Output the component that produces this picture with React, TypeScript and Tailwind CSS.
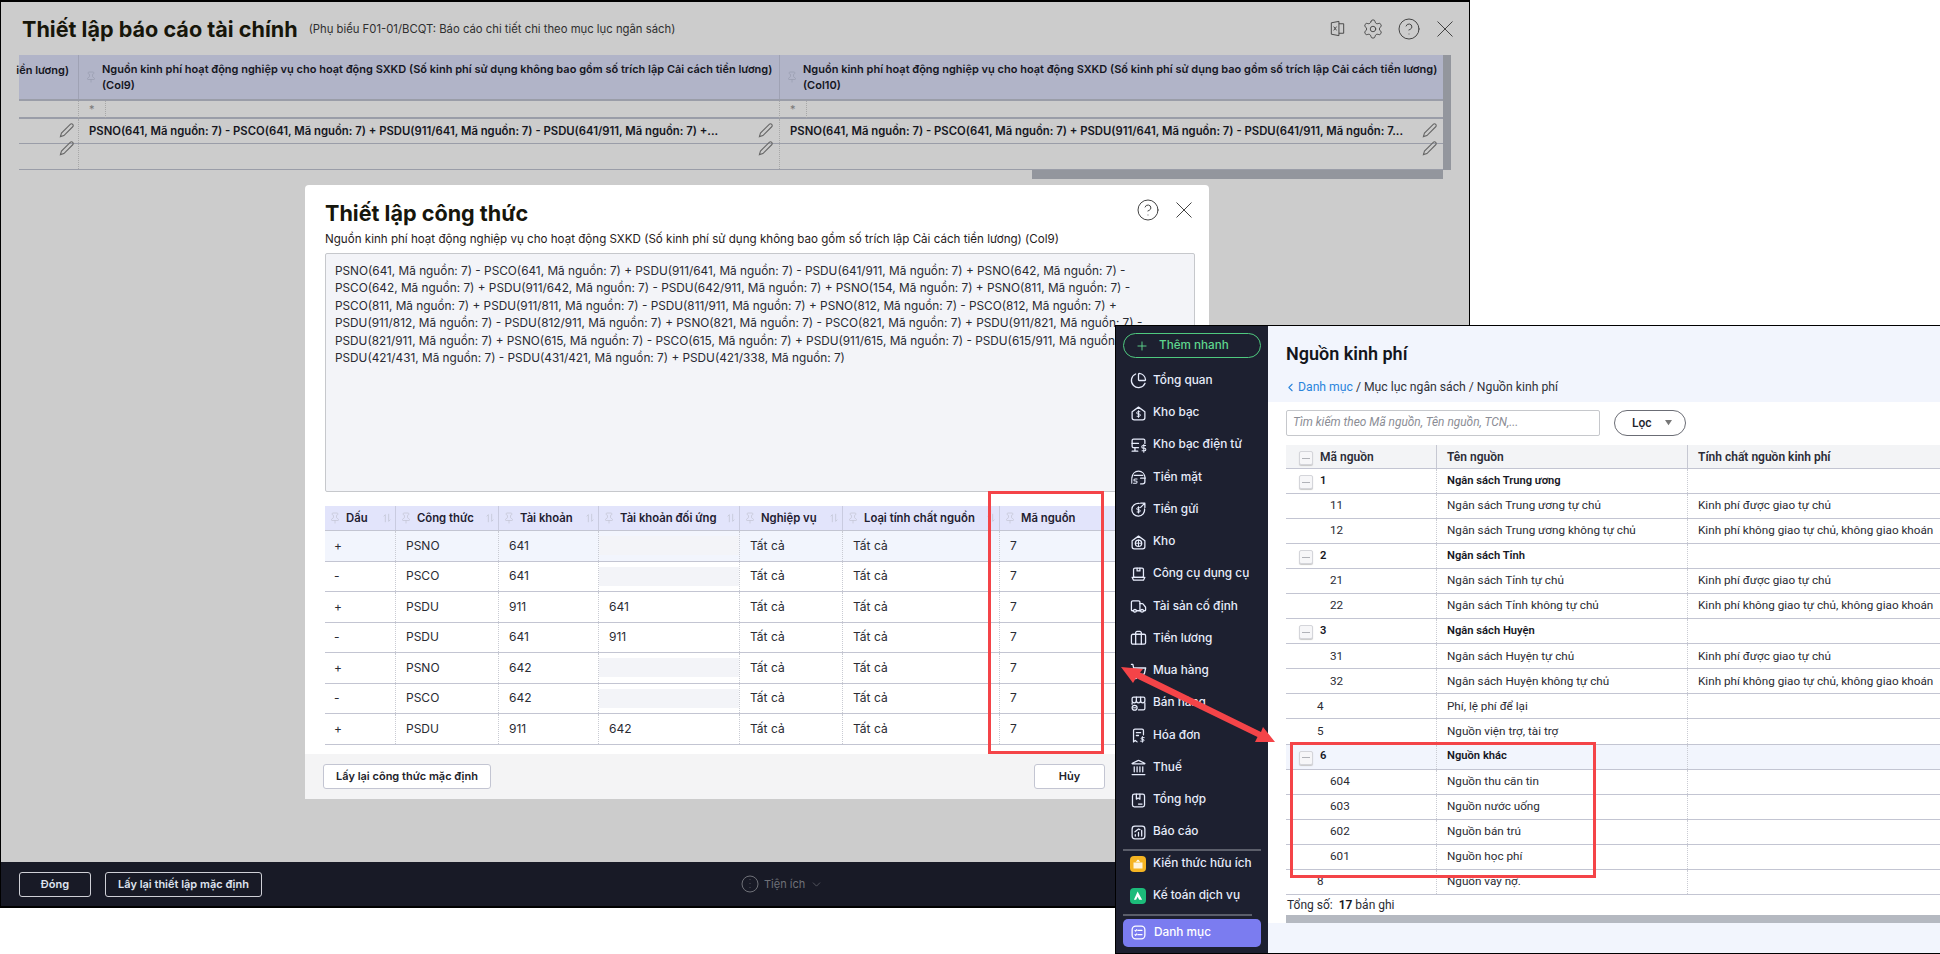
import {
  Briefcase,
  ChartPie,
  ChevronDown,
  ChevronLeft,
  HelpCircle,
  Landmark,
  Pin,
  Plus,
  Settings,
  ShoppingCart,
  Truck,
} from "lucide-react";
import type { ReactNode } from "react";

const line = { fill: "none", stroke: "currentColor", strokeWidth: 1.8, strokeLinecap: "round", strokeLinejoin: "round" } as const;

function Ico({ children }: { children: ReactNode }) {
  return (
    <svg viewBox="0 0 24 24" className="size-[17px] shrink-0" {...line}>
      {children}
    </svg>
  );
}

function CloseMark() {
  return (
    <svg viewBox="0 0 16 16" className="size-[16px]" fill="none" stroke="currentColor" strokeWidth="1">
      <path d="M.5.5l15 15M15.500.5l-15 15" />
    </svg>
  );
}

const sidebarItems: { label: string; icon: ReactNode }[] = [
  { label: "Tổng quan", icon: <ChartPie className="size-[17px]" strokeWidth={1.8} /> },
  {
    label: "Kho bạc",
    icon: (
      <Ico>
        <path d="M3 9.500 12 3l9 6.500V18a3 3 0 0 1-3 3H6a3 3 0 0 1-3-3z" />
        <path d="M14 9.500h-3a1.200 1.200 0 0 0 0 3.200h2a1.200 1.200 0 0 1 0 3.200h-3M12 8v9.500" strokeWidth="1.400" />
      </Ico>
    ),
  },
  {
    label: "Kho bạc điện tử",
    icon: (
      <Ico>
        <path d="M12 15H5a2 2 0 0 1-2-2V5a2 2 0 0 1 2-2h14a2 2 0 0 1 2 2v4" />
        <path d="M3 9h9M3 20h8M7 15v5" />
        <path d="M22 12h-3.500a1.500 1.500 0 0 0 0 3.800h2a1.500 1.500 0 0 1 0 3.700H17M19.500 10.500v11" strokeWidth="1.500" />
      </Ico>
    ),
  },
  {
    label: "Tiền mặt",
    icon: (
      <Ico>
        <path d="M2.500 13C3 7 7 3 12 3s9 4 9.500 10" />
        <path d="M6 9h12M21 13v5a3 3 0 0 1-3 3h-3M15 13h6" />
        <path d="M10 14H7a1.200 1.200 0 0 0 0 3h1.500a1.200 1.200 0 0 1 0 3H5M2.500 14v6" strokeWidth="1.500" />
      </Ico>
    ),
  },
  {
    label: "Tiền gửi",
    icon: (
      <Ico>
        <path d="M13 3.500A9 9 0 1 0 20.500 11" />
        <path d="M15 3h6v6M21 3l-6 6" />
        <path d="M14 9.500h-3a1.300 1.300 0 0 0 0 3h2a1.300 1.300 0 0 1 0 3h-3M12 8v9" strokeWidth="1.400" />
      </Ico>
    ),
  },
  {
    label: "Kho",
    icon: (
      <Ico>
        <path d="M3 9.500 12 3l9 6.500V18a3 3 0 0 1-3 3H6a3 3 0 0 1-3-3z" />
        <circle cx="12" cy="13" r="4.500" />
        <path d="M12 8.500v9M7.500 13h9" strokeWidth="1.400" />
      </Ico>
    ),
  },
  {
    label: "Công cụ dụng cụ",
    icon: (
      <Ico>
        <rect x="5" y="3" width="14" height="13" rx="2" />
        <path d="M3 16h18l-2 4H5zM10 3v4h4V3" />
      </Ico>
    ),
  },
  { label: "Tài sản cố định", icon: <Truck className="size-[17px]" strokeWidth={1.8} /> },
  { label: "Tiền lương", icon: <Briefcase className="size-[17px]" strokeWidth={1.8} /> },
  { label: "Mua hàng", icon: <ShoppingCart className="size-[17px]" strokeWidth={1.8} /> },
  {
    label: "Bán hàng",
    icon: (
      <Ico>
        <path d="M5 3h14a2 2 0 0 1 2 2v3a3 3 0 0 1-6 0 3 3 0 0 1-6 0 3 3 0 0 1-6 0V5a2 2 0 0 1 2-2z" />
        <path d="M9 3v5M15 3v5M21 11v8a2 2 0 0 1-2 2h-7M3 11v2" />
        <circle cx="6.500" cy="18" r="3.500" />
        <path d="M5 18h3" strokeWidth="1.400" />
      </Ico>
    ),
  },
  {
    label: "Hóa đơn",
    icon: (
      <Ico>
        <path d="M5 21V5a2 2 0 0 1 2-2h10a2 2 0 0 1 2 2v6M5 21l2.500-2 2.500 2" />
        <path d="M9 8h6M9 12h3" />
        <path d="M20 15h-3a1 1 0 0 0 0 2.500h1.500a1 1 0 0 1 0 2.500H15M17.500 13.500v8" strokeWidth="1.400" />
      </Ico>
    ),
  },
  { label: "Thuế", icon: <Landmark className="size-[17px]" strokeWidth={1.8} /> },
  {
    label: "Tổng hợp",
    icon: (
      <Ico>
        <rect x="3.500" y="3" width="17" height="18" rx="2.500" />
        <path d="M9 3v7l2.500-1.500L14 10V3M12 17h5" />
      </Ico>
    ),
  },
  {
    label: "Báo cáo",
    icon: (
      <Ico>
        <rect x="3" y="3" width="18" height="18" rx="4" />
        <path d="M7.500 17v-2M12 17v-5M16.500 17V9M7 11l5-4 2 1" />
      </Ico>
    ),
  },
];

const hSep = "border-r border-dotted border-[#c9cbd3]";

function PinMark({ className }: { className?: string }) {
  return <Pin className={`size-3 shrink-0 ${className ?? "text-[#c4c6d6]"}`} strokeWidth={1.5} />;
}

function SortMark() {
  return (
    <svg viewBox="0 0 12 12" className="ml-auto size-[10px] shrink-0 text-[#c4c6d6]" fill="none" stroke="currentColor" strokeWidth="1">
      <path d="M4 11V2L2 4M8 1v9l2-2" />
    </svg>
  );
}

function FormulaHead() {
  const cols = ["Dấu", "Công thức", "Tài khoản", "Tài khoản đối ứng", "Nghiệp vụ", "Loại tính chất nguồn", "Mã nguồn"];
  return (
    <div className="grid h-[25px] grid-cols-[71px_103px_100px_141px_103px_157px_195px] border-b border-[#c3c5d2] bg-[#e2e4fb] text-[11.300px] font-semibold text-[#1f2030]">
      {cols.map((c) => (
        <div key={c} className="flex items-center gap-[5px] border-r border-[#c9cbe0] pl-[4px] pr-[3px] last:border-r-0">
          <PinMark />
          <span className="whitespace-nowrap">{c}</span>
          <SortMark />
        </div>
      ))}
    </div>
  );
}

const formulaRows = [
  ["+", "PSNO", "641", "", true],
  ["-", "PSCO", "641", "", false],
  ["+", "PSDU", "911", "641", false],
  ["-", "PSDU", "641", "911", false],
  ["+", "PSNO", "642", "", false],
  ["-", "PSCO", "642", "", false],
  ["+", "PSDU", "911", "642", false],
] as const;

const formulaLines = [
  "PSNO(641, Mã nguồn: 7) - PSCO(641, Mã nguồn: 7) + PSDU(911/641, Mã nguồn: 7) - PSDU(641/911, Mã nguồn: 7) + PSNO(642, Mã nguồn: 7) -",
  "PSCO(642, Mã nguồn: 7) + PSDU(911/642, Mã nguồn: 7) - PSDU(642/911, Mã nguồn: 7) + PSNO(154, Mã nguồn: 7) + PSNO(811, Mã nguồn: 7) -",
  "PSCO(811, Mã nguồn: 7) + PSDU(911/811, Mã nguồn: 7) - PSDU(811/911, Mã nguồn: 7) + PSNO(812, Mã nguồn: 7) - PSCO(812, Mã nguồn: 7) +",
  "PSDU(911/812, Mã nguồn: 7) - PSDU(812/911, Mã nguồn: 7) + PSNO(821, Mã nguồn: 7) - PSCO(821, Mã nguồn: 7) + PSDU(911/821, Mã nguồn: 7) -",
  "PSDU(821/911, Mã nguồn: 7) + PSNO(615, Mã nguồn: 7) - PSCO(615, Mã nguồn: 7) + PSDU(911/615, Mã nguồn: 7) - PSDU(615/911, Mã nguồn: 7) -",
  "PSDU(421/431, Mã nguồn: 7) - PSDU(431/421, Mã nguồn: 7) + PSDU(421/338, Mã nguồn: 7)",
];

function FormulaModal() {
  return (
    <div className="absolute left-[305px] top-[185px] flex h-[614px] w-[904px] flex-col rounded-[4px] bg-white">
      <div className="flex h-[43px] items-start justify-between pl-[20px] pr-[7px] pt-[13px]">
        <h2 className="text-[21.600px] font-bold leading-[30px] text-[#16160c]">Thiết lập công thức</h2>
        <div className="flex items-center text-[#444]">
          <span className="flex w-[36px] justify-center">
            <HelpCircle className="size-[24px]" strokeWidth={1} />
          </span>
          <span className="flex w-[36px] justify-center">
            <CloseMark />
          </span>
        </div>
      </div>
      <p className="mt-[2px] pl-[20px] text-[11.600px] leading-[18px] text-[#1f2020]">
        Nguồn kinh phí hoạt động nghiệp vụ cho hoạt động SXKD (Số kinh phí sử dụng không bao gồm số trích lập Cải cách tiền lương) (Col9)
      </p>
      <div className="ml-[20px] mr-[14px] mt-[5px] h-[239px] rounded-[2px] border border-[#c6c8cc] bg-[#f3f4f8] px-[9px] py-[9px] text-[11.800px] leading-[17.400px] text-[#2a2b33]">
        {formulaLines.map((l) => (
          <div key={l} className="whitespace-nowrap">{l}</div>
        ))}
      </div>
      <div className="ml-[20px] mr-[14px] mt-[14px] h-[248px] overflow-hidden">
        <FormulaHead />
        {formulaRows.map(([sign, f, acc, other, hl], i) => (
          <div
            key={i}
            className={`grid h-[30.500px] grid-cols-[71px_103px_100px_141px_103px_157px_195px] border-b border-[#c3c5d2] text-[12px] text-[#2a2b33] ${hl ? "bg-[#f2f5fd]" : ""}`}
          >
            <div className={`flex items-center pl-[9px] ${hSep}`}>{sign}</div>
            <div className={`flex items-center pl-[10px] ${hSep}`}>{f}</div>
            <div className={`flex items-center pl-[10px] ${hSep}`}>{acc}</div>
            <div className={`flex items-center ${hSep}`}>
              {other ? <span className="pl-[10px]">{other}</span> : <div className="h-[19px] w-full bg-[#f3f4f8]" />}
            </div>
            <div className={`flex items-center pl-[10px] ${hSep}`}>Tất cả</div>
            <div className={`flex items-center pl-[10px] ${hSep}`}>Tất cả</div>
            <div className="flex items-center pl-[10px]">7</div>
          </div>
        ))}
      </div>
      <div className="mt-auto flex h-[45px] items-center justify-between bg-[#f4f4f5] pl-[18px] pr-[104px]">
        <button className="h-[25px] w-[168px] rounded-[3px] border border-[#c3c5d2] bg-white text-[11px] font-semibold text-[#22222a]">
          Lấy lại công thức mặc định
        </button>
        <button className="h-[25px] w-[71px] rounded-[3px] border border-[#c3c5d2] bg-white text-[11px] font-semibold text-[#22222a]">
          Hủy
        </button>
      </div>
    </div>
  );
}

const formulaShort = "PSNO(641, Mã nguồn: 7) - PSCO(641, Mã nguồn: 7) + PSDU(911/641, Mã nguồn: 7) - PSDU(641/911, Mã nguồn: 7) +...";
const formulaShort2 = "PSNO(641, Mã nguồn: 7) - PSCO(641, Mã nguồn: 7) + PSDU(911/641, Mã nguồn: 7) - PSDU(641/911, Mã nguồn: 7...";

function EditMark({ className }: { className: string }) {
  return (
    <svg viewBox="0 0 14 14" className={`absolute size-[15px] text-[#666] ${className}`} fill="none" stroke="currentColor" strokeWidth="1">
      <path d="M10.500 1.200a1.600 1.600 0 0 1 2.300 2.300L4.600 11.700 1.300 12.700l1-3.300z" />
    </svg>
  );
}

function ReportWindow() {
  return (
    <div className="absolute left-0 top-0 flex h-[908px] w-[1470px] flex-col border border-t-2 border-black bg-[#cccccc]">
      <div className="flex h-[53px] shrink-0 items-center pl-[21px] pr-[6px]">
        <h1 className="text-[21.600px] font-bold leading-[30px] text-[#17160a]">Thiết lập báo cáo tài chính</h1>
        <span className="ml-[11px] mt-[2px] text-[11.300px] text-[#2f2f2f]">
          (Phụ biểu F01-01/BCQT: Báo cáo chi tiết chi theo mục lục ngân sách)
        </span>
        <div className="ml-auto flex items-center text-[#444]">
          <span className="flex w-[36px] justify-center">
            <svg viewBox="0 0 20 20" className="size-[19px]" fill="none" stroke="currentColor" strokeWidth="1">
              <path d="M11.500 2.500 3.500 4v12l8 1.500zM11.500 5h5v10h-5" />
              <path d="m6 8 3 4M9 8l-3 4" />
            </svg>
          </span>
          <span className="flex w-[36px] justify-center">
            <Settings className="size-[22px]" strokeWidth={1} />
          </span>
          <span className="flex w-[36px] justify-center">
            <HelpCircle className="size-[24px]" strokeWidth={1} />
          </span>
          <span className="flex w-[36px] justify-center">
            <CloseMark />
          </span>
        </div>
      </div>
      <div className="ml-[18px] w-[1432px]">
        <div className="flex">
          <div className="w-[1424px] text-[#15161e]">
            <div className="grid h-[46px] grid-cols-[60px_701px_663px] border-b-2 border-[#9a9da8] bg-[#b1b4c8] text-[11px] font-semibold leading-[16px]">
              <div className="flex items-center justify-end border-r border-[#9fa2b4] pr-[9px]">
                <span className="-mt-[14px] whitespace-nowrap">iền lương)</span>
              </div>
              <div className="flex items-center gap-[5px] border-r border-[#9fa2b4] pl-[6px]">
                <PinMark className="text-[#9a9db0]" />
                <span className="whitespace-nowrap">
                  Nguồn kinh phí hoạt động nghiệp vụ cho hoạt động SXKD (Số kinh phí sử dụng không bao gồm số trích lập Cải cách tiền lương)
                  <br />
                  (Col9)
                </span>
              </div>
              <div className="flex items-center gap-[5px] pl-[6px]">
                <PinMark className="text-[#9a9db0]" />
                <span className="whitespace-nowrap">
                  Nguồn kinh phí hoạt động nghiệp vụ cho hoạt động SXKD (Số kinh phí sử dụng bao gồm số trích lập Cải cách tiền lương)
                  <br />
                  (Col10)
                </span>
              </div>
            </div>
            <div className="grid h-[18px] grid-cols-[60px_701px_663px] border-b-2 border-[#9a9da8] text-[11px] text-[#777]">
              <div className="border-r border-dotted border-[#a8a8a8]" />
              <div className="border-r border-dotted border-[#a8a8a8]">
                <span className="inline-block h-full w-[27px] border-r border-dotted border-[#a8a8a8] pl-[10px]">*</span>
              </div>
              <div>
                <span className="inline-block h-full w-[27px] border-r border-dotted border-[#a8a8a8] pl-[10px]">*</span>
              </div>
            </div>
            <div className="grid h-[25px] grid-cols-[60px_701px_663px] border-b border-[#9a9da8] text-[11.300px] font-semibold">
              <div className="relative border-r border-dotted border-[#a8a8a8]">
                <EditMark className="right-[4px] top-[4px]" />
              </div>
              <div className="relative flex items-center whitespace-nowrap border-r border-dotted border-[#a8a8a8] pl-[10px]">
                {formulaShort}
                <EditMark className="right-[6px] top-[4px]" />
              </div>
              <div className="relative flex items-center whitespace-nowrap pl-[10px]">
                {formulaShort2}
                <EditMark className="right-[6px] top-[4px]" />
              </div>
            </div>
            <div className="grid h-[26px] grid-cols-[60px_701px_663px] border-b border-[#9a9da8]">
              <div className="relative border-r border-dotted border-[#a8a8a8]">
                <EditMark className="right-[4px] -top-[3px]" />
              </div>
              <div className="relative border-r border-dotted border-[#a8a8a8]">
                <EditMark className="right-[6px] -top-[3px]" />
              </div>
              <div className="relative">
                <EditMark className="right-[6px] -top-[3px]" />
              </div>
            </div>
          </div>
          <div className="w-[8px] bg-[#93969d]" />
        </div>
        <div className="ml-[1013px] h-[9px] w-[411px] bg-[#93969d]" />
      </div>
      <div className="mt-auto flex h-[45px] shrink-0 items-center gap-[14px] border-b border-black bg-[#181a26] pl-[18px]">
        <button className="h-[25px] w-[72px] rounded-[3px] border border-[#cfd0d6] text-[11px] font-semibold text-[#dfe3ef]">Đóng</button>
        <button className="h-[25px] w-[157px] rounded-[3px] border border-[#cfd0d6] text-[11px] font-semibold text-[#dfe3ef]">
          Lấy lại thiết lập mặc định
        </button>
        <div className="ml-[465px] flex items-center gap-[5px] text-[11px] text-[#6f7178]">
          <svg viewBox="0 0 18 18" className="size-[18px]" fill="none" stroke="currentColor" strokeWidth="1">
            <circle cx="9" cy="9" r="8" />
            <path d="M9 4.500v.5M9 8.500v.5M9 12.500v.5" strokeWidth="1.300" />
          </svg>
          <span>Tiện ích</span>
          <ChevronDown className="size-[13px]" strokeWidth={1.2} />
        </div>
      </div>
    </div>
  );
}

function Sidebar() {
  return (
    <aside className="flex w-[152px] shrink-0 flex-col bg-[#1d2030] px-[7px] pt-[7px] text-[#e7ecfb]">
      <div className="flex h-[25px] items-center gap-[7px] rounded-full border border-[#4fc97f] pl-[11px] text-[11.700px] font-medium text-[#5fd68e]">
        <Plus className="size-[14px]" strokeWidth={1.6} />
        <span className="pl-[3px]">Thêm nhanh</span>
      </div>
      <div className="mt-[6.700px] flex flex-col">
        {sidebarItems.map((it) => (
          <div key={it.label} className="flex h-[32.250px] items-center gap-[6px] pl-[7px] text-[11.800px] font-medium">
            <span className="flex w-[17px] justify-center">{it.icon}</span>
            <span className="whitespace-nowrap">{it.label}</span>
          </div>
        ))}
      </div>
      <div className="mt-[0.500px] h-[2px] shrink-0 bg-[#5b5e6a]" />
      <div className="-mt-[3px] flex h-[32px] items-center gap-[7px] pl-[7px] text-[11.800px] font-medium">
        <span className="flex size-[16px] items-center justify-center rounded-[4px] bg-[#f5b423]">
          <svg viewBox="0 0 16 16" className="size-[12px]" fill="#fff">
            <path d="M2 6h12v8H2z" opacity=".85" />
            <path d="M8 2 5 5h6z" />
          </svg>
        </span>
        Kiến thức hữu ích
      </div>
      <div className="flex h-[32px] items-center gap-[7px] pl-[7px] text-[11.800px] font-medium">
        <span className="flex size-[16px] items-center justify-center rounded-[4px] bg-[#1cbb7a]">
          <svg viewBox="0 0 16 16" className="size-[12px]" fill="#fff">
            <path d="M7.500 2 13.500 13H9.500L7.500 9 5.500 13H2.500z" />
          </svg>
        </span>
        Kế toán dịch vụ
      </div>
      <div className="mr-[9px] mt-[2px] h-[2px] shrink-0 bg-[#5b5e6a]" />
      <div className="mt-[3px] flex h-[28px] shrink-0 items-center gap-[7px] rounded-[5px] bg-[#7b7cf0] pl-[7px] text-[11.800px] font-medium text-white">
        <svg viewBox="0 0 24 24" className="size-[17px]" {...line}>
          <rect x="3" y="3" width="18" height="18" rx="5" />
          <path d="M11 9h6M11 15h6M7 9l1 1 1.500-2M7 15l1 1 1.500-2" strokeWidth="1.500" />
        </svg>
        Danh mục
      </div>
    </aside>
  );
}

function Minus() {
  return (
    <span className="absolute left-[13px] top-[6px] flex h-[14px] w-[14px] items-center justify-center rounded-[2px] border border-[#d4d5da] bg-[#f6f6f8] shadow-[0_1px_1px_#c8c8c8]">
      <span className="h-px w-[8px] bg-[#b0b2b8]" />
    </span>
  );
}

type SourceRow = { code: string; name: string; kind?: string; level: 0 | 1 | 2; hl?: boolean };

const own = "Kinh phí được giao tự chủ";
const notOwn = "Kinh phí không giao tự chủ, không giao khoán";

const sourceRows: SourceRow[] = [
  { code: "1", name: "Ngân sách Trung ương", level: 0 },
  { code: "11", name: "Ngân sách Trung ương tự chủ", kind: own, level: 2 },
  { code: "12", name: "Ngân sách Trung ương không tự chủ", kind: notOwn, level: 2 },
  { code: "2", name: "Ngân sách Tỉnh", level: 0 },
  { code: "21", name: "Ngân sách Tỉnh tự chủ", kind: own, level: 2 },
  { code: "22", name: "Ngân sách Tỉnh không tự chủ", kind: notOwn, level: 2 },
  { code: "3", name: "Ngân sách Huyện", level: 0 },
  { code: "31", name: "Ngân sách Huyện tự chủ", kind: own, level: 2 },
  { code: "32", name: "Ngân sách Huyện không tự chủ", kind: notOwn, level: 2 },
  { code: "4", name: "Phí, lệ phí để lại", level: 1 },
  { code: "5", name: "Nguồn viện trợ, tài trợ", level: 1 },
  { code: "6", name: "Nguồn khác", level: 0, hl: true },
  { code: "604", name: "Nguồn thu căn tin", level: 2 },
  { code: "603", name: "Nguồn nước uống", level: 2 },
  { code: "602", name: "Nguồn bán trú", level: 2 },
  { code: "601", name: "Nguồn học phí", level: 2 },
  { code: "8", name: "Nguồn vay nợ.", level: 1 },
];

function SourceWindow() {
  return (
    <div className="absolute left-[1115px] top-[325px] flex h-[629px] w-[825px] border-y border-l border-black bg-[#f2f5fd]">
      <Sidebar />
      <div className="relative flex min-w-0 flex-1 flex-col font-['Roboto',sans-serif]">
        <div className="h-[76px] shrink-0 pl-[18px]">
          <h2 className="pt-[15px] text-[18px] font-semibold leading-[26px] text-[#14151c]">Nguồn kinh phí</h2>
          <div className="mt-[11px] flex items-center text-[12.200px] leading-[18px] text-[#30323a]">
            <ChevronLeft className="-ml-[2px] size-[13px] text-[#2a84dc]" strokeWidth={2} />
            <span className="ml-[1px] text-[#2a84dc]">Danh mục</span>
            <span>&nbsp;/ Mục lục ngân sách / Nguồn kinh phí</span>
          </div>
        </div>
        <div className="flex-1 bg-white pl-[18px]">
          <div className="mt-[8px] flex h-[26px] items-center">
            <div className="flex h-full w-[314px] items-center rounded-[2px] border border-[#c6c8cc] pl-[6px] text-[11.900px] italic text-[#8b8d95]">
              Tìm kiếm theo Mã nguồn, Tên nguồn, TCN,...
            </div>
            <div className="ml-[14px] flex h-full w-[72px] items-center rounded-full border border-[#6b6d75] pl-[17px] text-[12px] font-medium text-[#22232b]">
              Lọc
              <svg viewBox="0 0 8 6" className="ml-[13px] w-[7px] fill-[#777]">
                <path d="M0 0h8L4 6z" />
              </svg>
            </div>
          </div>
          <div className="mt-[9px] grid h-[24px] grid-cols-[151px_251px_1fr] border-b border-[#c3c5d2] bg-[#f3f4f6] text-[12px] font-semibold text-[#2b2c36]">
            <div className="relative flex items-center border-r border-[#c6c8d2] pl-[34px]">
              <Minus />
              Mã nguồn
            </div>
            <div className="flex items-center border-r border-[#c6c8d2] pl-[10px]">Tên nguồn</div>
            <div className="flex items-center pl-[10px]">Tính chất nguồn kinh phí</div>
          </div>
          {sourceRows.map((r) => (
            <div
              key={r.code}
              className={`grid h-[25.050px] grid-cols-[151px_251px_1fr] border-b border-[#c3c5d2] text-[#2a2b33] ${r.hl ? "bg-[#f2f5fd]" : ""} ${r.level === 0 ? "text-[11.200px] font-semibold text-[#16171f]" : "text-[11.700px]"}`}
            >
              <div
                className={`relative flex items-center ${hSep} ${r.level === 0 ? "pl-[34px]" : r.level === 1 ? "pl-[31px]" : "pl-[44px]"}`}
              >
                {r.level === 0 && <Minus />}
                {r.code}
              </div>
              <div className={`flex items-center pl-[10px] ${hSep}`}>{r.name}</div>
              <div className="flex items-center whitespace-nowrap pl-[10px] font-normal">{r.kind}</div>
            </div>
          ))}
          <div className="flex h-[20px] items-center pl-px text-[12px] text-[#2a2b33]">
            Tổng số:&nbsp;&nbsp;<b className="font-semibold text-[#16171f]">17</b>&nbsp;bản ghi
          </div>
          <div className="h-[8px] bg-[#b5b9c1]" />
        </div>
        <div className="h-[30px] shrink-0 bg-[#f2f5fd]" />
      </div>
    </div>
  );
}

export default function App() {
  return (
    <div className="relative h-[954px] w-[1940px] overflow-hidden bg-white font-['Inter',sans-serif]">
      <ReportWindow />
      <FormulaModal />
      <SourceWindow />
      <div className="absolute left-[988px] top-[491px] h-[263px] w-[116px] border-[3px] border-[#f44448]" />
      <div className="absolute left-[1290px] top-[742px] h-[136px] w-[306px] border-[3px] border-[#f44448]" />
      <svg className="absolute left-[1115px] top-[655px] h-[100px] w-[170px]" viewBox="0 0 170 100">
        <path d="M6 12 28 14 25 17.500 146 77 148 72 160 87 140 87 142.500 82 21 23 18 28Z" fill="#f44448" />
      </svg>
    </div>
  );
}
